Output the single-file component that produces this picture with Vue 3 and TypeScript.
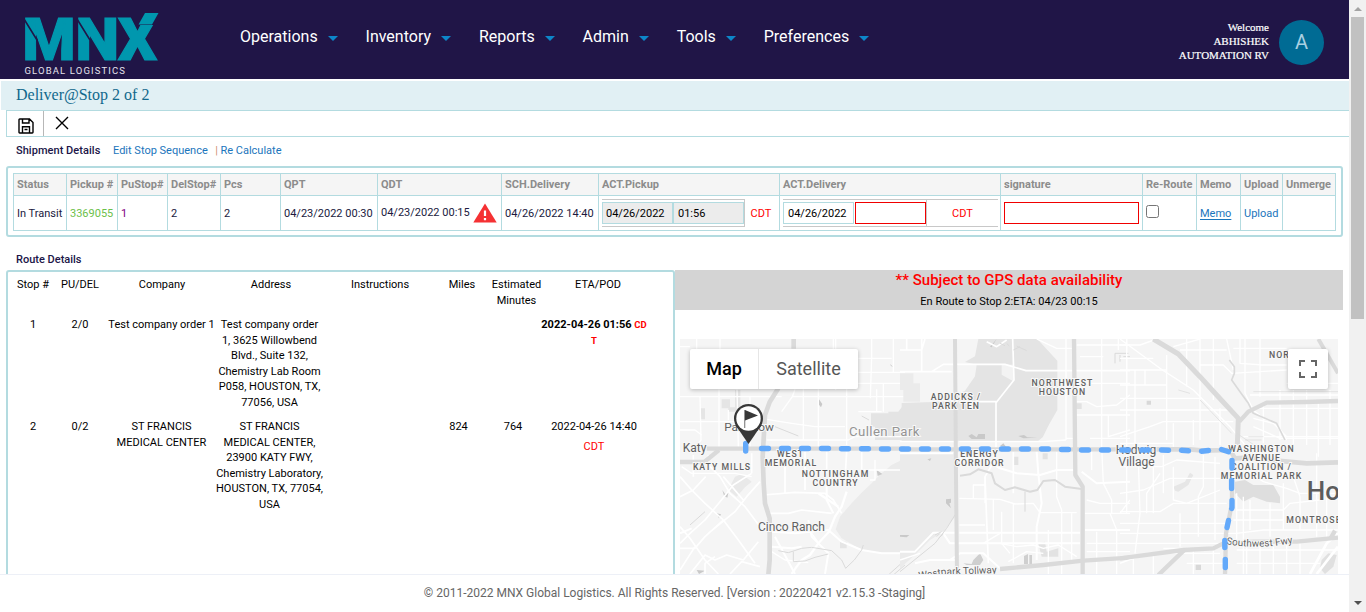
<script setup lang="ts">
interface Road { d: string; w?: number }
interface Label { x: number; y: number; t: string; s: number; ls?: number; w?: number; c?: string }

const menu: string[] = ['Operations', 'Inventory', 'Reports', 'Admin', 'Tools', 'Preferences']
const heads: string[] = ['Status', 'Pickup #', 'PuStop#', 'DelStop#', 'Pcs', 'QPT', 'QDT', 'SCH.Delivery', 'ACT.Pickup', 'ACT.Delivery', 'signature', 'Re-Route', 'Memo', 'Upload', 'Unmerge']
const routeHeads: string[] = ['Stop #', 'PU/DEL', 'Company', 'Address', 'Instructions', 'Miles', 'Estimated\nMinutes', 'ETA/POD']

const tiles: { x: number; areas: { d: string; c: string }[]; roads: Road[]; highways: Road[] }[] = [
  {
    x: 675,
    areas: [
      { d: 'M690 385L650 405L620 430L590 460L560 488L530 520L495 560L482 598L500 625L560 660L620 668H690Z', c: '#ebebeb' },
      { d: 'M690 219L670 245H640V250H588V290H600V330H690Z', c: '#e4e4e4' },
      { d: 'M180 440L200 432L230 455L210 472L185 500L160 480Z', c: '#e9e9e9' },
      { d: 'M140 208H165V235H140ZM180 180H196V230H205V245H160V232H180ZM75 235H90V268H75ZM495 635H515V655H495Z', c: '#e5e5e5' },
      { d: 'M142 480L150 492L160 488L157 503L147 497ZM432 208L442 222L438 232L432 224ZM605 420L622 432L608 438ZM65 720L90 722L72 732ZM645 102L656 112L648 108Z', c: '#c9c9c9' },
      { d: 'M125 550L138 553L132 565Z', c: '#c9c9c9' }
    ],
    roads: [
      { d: 'M15 50H45M65 27V58M135 27V58M15 200H320M132 178V350M75 200L78 330L50 370M15 275H265M186 178L190 350' },
      { d: 'M275 268L350 280L420 290H510M320 245L352 200L360 178M352 200H690M385 178V330M430 130V350M482 27V180M515 155V345' },
      { d: 'M490 60V160H690M550 127H690M590 27V80L586 205M655 27V127M625 160V245M550 245H620M275 330H520L540 320H690' },
      { d: 'M475 27V58M550 85H650M605 178V245M160 240V270M225 200V350M15 300H60L80 315' },
      { d: 'M100 375V420M55 375V440M230 370V430M330 365V490M390 365V480M515 365L510 450L520 470M455 365V430M560 365V420H690', w: 5 },
      { d: 'M15 440L50 480L90 520L145 570L190 630L240 700M90 395L135 440L165 490L210 530L255 590M230 430L175 465L135 515L90 570L45 610L15 640', w: 5 },
      { d: 'M15 500L55 480L92 440M145 440L205 510M255 455L215 500L180 545L100 610M15 655H60L90 620L145 570M15 590L45 625L90 690L130 732M45 732L90 675L120 690L155 675L205 690L250 635', w: 5 },
      { d: 'M15 720L60 650M90 732V700L120 680M165 732L200 695L255 710M265 495L360 487L450 490L475 510L500 550M275 550H340L380 540L470 550', w: 5 },
      { d: 'M430 490L490 530M515 485L500 530L480 560L462 605L430 640L405 675L380 690L365 710L350 732', w: 7 },
      { d: 'M15 610L50 595M290 605L360 610L460 600L500 635L560 660L620 670H690M290 650L350 655L380 650M300 620L360 732M400 570L410 620L460 670L450 732M455 460V510L475 550', w: 6 },
      { d: 'M410 610L435 645M290 665L330 690L400 698M585 450H600V390M330 365L350 395M20 410L50 430H180L230 440' }
    ],
    highways: [
      { d: 'M356 27V56', w: 14 },
      { d: 'M310 175L284 216L270 255L263 380L266 460L270 520L284 565V690L280 735', w: 14 },
      { d: 'M95 356H690', w: 13 }, { d: 'M15 396H88L132 360', w: 13 },
      { d: 'M310 662L340 668L380 655L410 652L470 662L500 690L512 715L538 690L560 660L565 645M355 665V695L390 693L420 682L460 672', w: 3 },
      { d: 'M640 735L690 690M655 735L690 705M45 585L90 545M300 290L370 318M560 258L582 270', w: 3 }
    ]
  },
  {
    x: 900,
    areas: [
      { d: 'M235 27H412L472 92V240L448 282L428 322L415 332H5V219L170 214V194L195 182L225 139L230 104L195 96L225 79Z', c: '#e4e4e4' },
      { d: 'M305 104H340V154L305 134Z', c: '#f3f3f3' },
      { d: 'M0 368H165V560L130 605L90 630L50 670L0 715Z', c: '#ebebeb' },
      { d: 'M0 130H40V160H60V215H10V180H0Z', c: '#ebebeb' },
      { d: 'M340 380H355V405H340ZM428 370H443V388H428ZM528 220H545V237H528ZM415 640L435 635L440 665L475 655V680H425Z', c: '#e2e2e2' },
      { d: 'M205 318L215 312L230 322L235 312H255V327H215ZM270 50L290 27L275 52ZM355 318L372 315L382 322L412 323L370 325ZM300 348L310 340L318 350ZM138 508L153 506V518L148 520L153 535L138 520ZM0 615H28L20 622L0 620ZM82 388L94 385L90 393Z', c: '#c9c9c9' },
      { d: 'M190 700L215 702L220 690L240 670L250 690L240 705H200ZM372 678L384 672V702H372ZM388 675H396V704H388Z', c: '#cfcfcf' }
    ],
    roads: [
      { d: 'M0 60H65L75 27M65 27V125M0 125H155M20 27V58M95 125L130 103H315L378 122H690', w: 5 },
      { d: 'M260 35L290 50L320 30M338 27L342 150L288 218V350L282 395L255 440L265 700M178 215H290M340 365V490', w: 5 },
      { d: 'M410 27L470 55H520M498 27V330M605 27V350L610 460L635 510V550M655 27V60M680 27V200M530 45H690M540 80H610M530 160H690' },
      { d: 'M530 215H560L590 230L650 225L690 195M530 255H690M625 255V320L690 300M498 325H530M0 335H170M178 335H430L498 330M570 325H690' },
      { d: 'M0 370H160M178 385H250L300 415L350 430L420 435L470 420H520M545 425L590 460L690 455M410 365L415 430L425 520L410 590V690', w: 6 },
      { d: 'M178 505L300 508L345 522L400 520L420 548H530M560 510L600 520H690M555 550H690M220 505V465H255M255 440V520M470 365V500L485 540V732' },
      { d: 'M178 608H540M555 600H690M0 665H45L100 608H165M45 700L90 690L130 690H170M130 610L150 640H540M150 690L180 670H250L300 715', w: 6 },
      { d: 'M305 545V640L330 670M340 520V700M445 600V732M515 550V700M560 640H690M560 665H690M590 605V732M630 550L650 600V732M660 550L690 510M280 508V600' },
      { d: 'M0 690L60 670M180 640L250 640L300 610M300 640L350 650L400 645L430 655L475 645L530 680M325 695L380 665L430 670M178 585H255M575 365V420' }
    ],
    highways: [
      { d: 'M165 27L168 440L171 735', w: 12 }, { d: 'M522 27L526 435L548 470V735', w: 13 },
      { d: 'M0 358H690', w: 13 }, { d: 'M300 717L430 705L550 692L690 683', w: 13 },
      { d: 'M180 437L210 433L235 418L275 430L285 460L315 480L345 472L390 485L412 480L430 453L465 450L495 470L545 477', w: 6 },
      { d: 'M0 725L105 640L140 595L165 555M105 615L125 605M110 620L120 610M115 625L130 612', w: 3 },
      { d: 'M300 40L315 47M320 40L328 48M350 48L380 62M340 60L360 50M645 70H685M645 70V100M660 75V95M670 80H690M375 485V545', w: 3 }
    ]
  },
  {
    x: 1120,
    areas: [
      { d: 'M345 455L375 450L400 465L460 465L480 500V520L440 515L400 500L370 515L345 490Z', c: '#dedede' },
      { d: 'M160 470L195 455L210 428L220 435L205 465L175 485L165 482Z', c: '#e6e6e6' },
      { d: 'M605 690L625 670L650 675L640 710L615 732L600 715Z', c: '#e0e0e0' },
      { d: 'M80 212H93V224H80ZM227 704H243V720H227ZM385 630H400V650H385Z', c: '#d8d8d8' }
    ],
    roads: [
      { d: 'M0 45H60L110 27M0 85H100M0 120H140M0 165H140M20 27V350M45 120V350M75 120V165M140 75V330M0 205H240M0 240H340' },
      { d: 'M0 27L120 115L220 180L330 290L375 345M160 50L240 27M180 60H320M200 27V170M240 27V330M280 27V210M320 27L340 120' },
      { d: 'M240 105H310L335 130L500 120M340 55H500M360 27V100L430 105H500M420 27V200M480 180V330M400 235H654M400 265L460 280L500 320' },
      { d: 'M375 27V190L400 240L430 265L470 280L500 330M390 195H654M430 225V340M520 180V345M560 180V345M595 220V380M630 180V345M500 160H654' },
      { d: 'M400 290L480 325H654M370 320H654M0 320L90 290L130 275L340 275M0 340H160M160 280V350M220 270V345M300 235V345' },
      { d: 'M20 375V550M55 390L60 550L45 670M100 385V550M130 375V490M160 410V510L200 520L300 480M250 375V470L235 500V620M285 380V630' },
      { d: 'M0 410H125L170 390L300 400M0 490L70 480L150 445H300M0 545H120L160 520H320M0 580H320M0 610H350L430 600H654M0 640H310' },
      { d: 'M120 430L80 490V550M180 550V650M350 400L430 455L500 475L540 490H650M350 490V630M370 500V732M390 510V600M450 520V620M490 460V600' },
      { d: 'M520 440L540 500V600M590 370V620M620 500V620M350 540H490L510 520L600 510M340 570H490M380 625V732M420 650V732M460 650V732M540 640V732' },
      { d: 'M350 660H654M350 700H600M500 620L500 732M0 700L80 670H300M40 680V732M100 670V732M220 655V732M280 655V732M130 655H210M200 700H310' },
      { d: 'M570 732L620 640L654 610M590 732L654 650', w: 8 }
    ],
    highways: [
      { d: 'M100 27L175 72L240 140L290 195L355 265L352 345', w: 15 },
      { d: 'M358 275L385 245L440 218L555 216L654 213', w: 13 },
      { d: 'M595 27L654 130', w: 12 },
      { d: 'M0 358H210L250 362L330 360L345 385L400 382L470 392L560 400L654 397', w: 14 },
      { d: 'M336 385V520L318 610L315 735', w: 13 },
      { d: 'M0 685L190 660L280 655L310 640L400 635H530L654 623', w: 13 },
      { d: 'M195 658L115 735M632 625L645 602', w: 13 },
      { d: 'M328 90L343 110V130L335 150L360 185L385 220L400 250L435 265L470 280L495 330', w: 5 },
      { d: 'M400 185H654M385 320H430M375 330H425M240 210L335 310M350 310L410 350M175 180L210 190', w: 2 }
    ]
  }
]

const labels: Label[] = [
  { x: 749, y: 431, t: 'Park Row', s: 11.8 },
  { x: 694.5, y: 452, t: 'Katy', s: 12 },
  { x: 722, y: 470, t: 'KATY MILLS', s: 8.7, ls: 1 },
  { x: 790.5, y: 457, t: 'WEST', s: 8.7, ls: 1 },
  { x: 791, y: 466, t: 'MEMORIAL', s: 8.7, ls: 1 },
  { x: 835.5, y: 477, t: 'NOTTINGHAM', s: 8.7, ls: 1.1 },
  { x: 835.5, y: 486, t: 'COUNTRY', s: 8.7, ls: 1 },
  { x: 791.5, y: 531, t: 'Cinco Ranch', s: 12 },
  { x: 884.5, y: 436, t: 'Cullen Park', s: 13.2, ls: 0.4, c: '#949494' },
  { x: 956, y: 400, t: 'ADDICKS /', s: 8.7, ls: 1 },
  { x: 956, y: 409, t: 'PARK TEN', s: 8.7, ls: 1 },
  { x: 1062.5, y: 386, t: 'NORTHWEST', s: 8.7, ls: 1.1 },
  { x: 1062.5, y: 395, t: 'HOUSTON', s: 8.7, ls: 1 },
  { x: 979.5, y: 457, t: 'ENERGY', s: 8.7, ls: 1 },
  { x: 979.5, y: 466, t: 'CORRIDOR', s: 8.7, ls: 1 },
  { x: 1136, y: 454, t: 'Hedwig', s: 12 },
  { x: 1136.5, y: 466, t: 'Village', s: 12 },
  { x: 1261.5, y: 452, t: 'WASHINGTON', s: 8.7, ls: 1 },
  { x: 1261.5, y: 461, t: 'AVENUE', s: 8.7, ls: 1 },
  { x: 1261.5, y: 470, t: 'COALITION /', s: 8.7, ls: 1 },
  { x: 1261.5, y: 479, t: 'MEMORIAL PARK', s: 8.7, ls: 1 },
  { x: 1286, y: 358, t: 'NORTH', s: 8.7, ls: 1 },
  { x: 1314, y: 523, t: 'MONTROSE', s: 8.7, ls: 1.1 },
  { x: 1356, y: 500, t: 'Houston', s: 26, w: 500, c: '#5c5c5c' }
]
</script>

<template>
  <div class="screen">
    <div class="page">
      <header class="top">
        <svg class="logo" width="140" height="66" viewBox="20 10 140 66">
          <g class="mark">
            <text x="22.500" y="60" textLength="53" lengthAdjust="spacingAndGlyphs">M</text>
            <text x="75.500" y="60" textLength="43.500" lengthAdjust="spacingAndGlyphs">N</text>
            <text x="118" y="60" textLength="39" lengthAdjust="spacingAndGlyphs">X</text>
          </g>
          <path class="cut" d="M24 19L37 40V61M77 19L90 40V61" />
          <path d="M137 10H162V25H137Z" fill="#201547" />
          <path class="flag" d="M145 13H158.500L152 24.500H138.500Z" />
          <text class="sub" x="24.500" y="73.700" textLength="100.500">GLOBAL LOGISTICS</text>
        </svg>
        <nav class="menu">
          <a v-for="m in menu" :key="m" class="item">{{ m }}<i class="caret"></i></a>
        </nav>
        <div class="user">
          <div class="welcome">Welcome<br />ABHISHEK<br />AUTOMATION RV</div>
          <div class="avatar">A</div>
        </div>
      </header>
      <h1 class="title">Deliver@Stop 2 of 2</h1>
      <div class="toolbar">
        <button class="tool save">
          <svg width="16" height="16" viewBox="0 0 16 16"><path d="M1 1.700Q1 1 1.700 1H11.500L15 4.500V14.300Q15 15 14.300 15H1.700Q1 15 1 14.300ZM4.500 1V5H11V1M4.500 15V8.800H11.500V15M6.500 11.500H9.500" /></svg>
        </button>
        <button class="tool close">
          <svg width="14" height="14" viewBox="0 0 14 14"><path d="M1 1L13 13M13 1L1 13" /></svg>
        </button>
      </div>
      <div class="links"><b>Shipment Details</b><a>Edit Stop Sequence</a><i>|</i><a>Re Calculate</a></div>
      <section class="shipment">
        <div class="grid">
          <div v-for="h in heads" :key="h" class="th">{{ h }}</div>
          <div class="td">In Transit</div>
          <div class="td green">3369055</div>
          <div class="td purple">1</div>
          <div class="td">2</div>
          <div class="td">2</div>
          <div class="td">04/23/2022 00:30</div>
          <div class="td qdt"><span>04/23/2022 00:15</span>
            <svg width="24" height="20" viewBox="0 0 24 20"><path d="M12 .5L23.700 19.500H.3Z" fill="#f53133" /><path d="M12 7.500V13M12 15V17.300" stroke="#fff" stroke-width="2.200" /></svg>
          </div>
          <div class="td">04/26/2022 14:40</div>
          <div class="td pair">
            <div class="fields closed"><span class="box off">04/26/2022</span><span class="box off">01:56</span></div><span class="cdt">CDT</span>
          </div>
          <div class="td pair">
            <div class="fields wide"><span class="box first-box">04/26/2022</span><span class="box error">&nbsp;</span><span class="cdt mid">CDT</span></div>
          </div>
          <div class="td pair"><span class="box error sign"></span></div>
          <div class="td pair"><span class="check"></span></div>
          <div class="td link"><u>Memo</u></div>
          <div class="td link">Upload</div>
          <div class="td"></div>
        </div>
      </section>
      <h2 class="section">Route Details</h2>
      <div class="lower">
        <section class="route">
          <div class="rrow rhead"><div v-for="h in routeHeads" :key="h">{{ h }}</div></div>
          <div class="rrow first">
            <div>1</div><div>2/0</div><div>Test company order 1</div>
            <div>Test company order<br />1, 3625 Willowbend<br />Blvd., Suite 132,<br />Chemistry Lab Room<br />P058, HOUSTON, TX,<br />77056, USA</div>
            <div></div><div></div><div></div>
            <div class="eta"><b>2022-04-26 01:56</b> <em>CD<br />T</em></div>
          </div>
          <div class="rrow">
            <div>2</div><div>0/2</div><div>ST FRANCIS<br />MEDICAL CENTER</div>
            <div>ST FRANCIS<br />MEDICAL CENTER,<br />23900 KATY FWY,<br />Chemistry Laboratory,<br />HOUSTON, TX, 77054,<br />USA</div>
            <div></div><div>824</div><div>764</div>
            <div>2022-04-26 14:40<span class="zone">CDT</span></div>
          </div>
        </section>
        <section class="tracking">
          <div class="notice"><strong>** Subject to GPS data availability</strong><span>En Route to Stop 2:ETA: 04/23 00:15</span></div>
          <div class="map">
            <svg width="658" height="235" viewBox="680 339 658 235">
              <defs>
                <clipPath id="tile"><rect x="0" y="0" width="690" height="750" /></clipPath>
                <path id="tollway" d="M919 579L945 575L999 573" />
                <path id="fwy" d="M1226 544Q1256 550 1293 543" />
              </defs>
              <rect x="680" y="339" width="658" height="235" fill="#f5f5f5" />
              <g v-for="t in tiles" :key="t.x" :transform="`translate(${t.x} 330) scale(.33333)`">
                <g clip-path="url(#tile)">
                  <path v-for="a in t.areas" :key="a.d" :d="a.d" :fill="a.c" />
                  <path v-for="r in t.roads" :key="r.d" class="road" :d="r.d" :stroke-width="r.w ?? 4" />
                  <path v-for="r in t.highways" :key="r.d" class="highway" :d="r.d" :stroke-width="r.w" />
                </g>
              </g>
              <text v-for="l in labels" :key="l.t" class="label" :x="l.x" :y="l.y" :font-size="l.s" :letter-spacing="l.ls ?? 0" :font-weight="l.w ?? (l.s < 9 ? 500 : 400)" :fill="l.c ?? '#616161'">{{ l.t }}</text>
              <text class="road-name"><textPath href="#tollway">Westpark Tollway</textPath></text>
              <text class="road-name"><textPath href="#fwy">Southwest Fwy</textPath></text>
              <path class="trip" d="M745.700 443.500V451M761.500 448.500H768.500M781.500 448.500H788.500M801.500 448.500H808.500M821.500 448.500H828.500M841.500 448.700H848.500M861.500 448.800H868.500M881.500 449H888.500M901.500 449H908.500M921.500 449H928.500M941.500 449H948.500M961.500 449H968.500M981.500 449H988.500M1001.500 449H1008.500M1021.500 449H1028.500M1041.500 449H1048.500M1061.500 449.500H1068.500M1081.500 450H1088.500M1101.500 450H1108.500M1121.500 450H1128.500M1141.500 450H1148.500M1161.500 450L1168.500 450.200M1181.500 450.300L1188.500 450.800M1201.500 451.200L1208.500 450.500M1221.500 449.500L1228.500 451.800M1232 460.500V468M1231.600 480.500V488.500M1232 500.500V507.500L1231.700 508.500M1228.500 520.500L1227 527.500M1224.800 540.500V547.500M1225.300 559.500V567.500" />
              <circle cx="748.500" cy="418.500" r="14.500" fill="#383838" />
              <path d="M735.500 425L748.500 444L761.500 425Z" fill="#383838" />
              <circle cx="748.500" cy="418.500" r="12.200" fill="#fff" />
              <path d="M744.700 410V428" stroke="#888" stroke-width="1.200" />
              <path d="M745 410L758 415.500L745 420.500Z" fill="#383838" />
            </svg>
            <div class="types"><span class="active">Map</span><span>Satellite</span></div>
            <div class="full"><svg width="18" height="18" viewBox="0 0 18 18"><path d="M1 6V1H6M12 1H17V6M17 12V17H12M6 17H1V12" /></svg></div>
          </div>
        </section>
      </div>
      <footer class="foot">© 2011-2022 MNX Global Logistics. All Rights Reserved. [Version : 20220421 v2.15.3 -Staging]</footer>
    </div>
    <aside class="scroll"><i class="up"></i><div class="thumb"></div><i class="down"></i></aside>
  </div>
</template>

<style>
html, body { margin: 0; overflow: hidden; }
</style>

<style scoped>
* { box-sizing: border-box; }
.screen { display: flex; width: 1366px; height: 612px; overflow: hidden; background: #fff; font: 11px/15.6px Roboto, sans-serif; color: #1c1c1c; }
.page { width: 1349px; height: 612px; display: flex; flex-direction: column; overflow: hidden; }
.top { height: 79px; flex: none; background: #201547; display: flex; }
.logo { margin: 10px 0 0 20px; flex: none; overflow: visible; }
.mark { font: 900 59.500px Roboto, sans-serif; fill: #0097ae; }
.mark text { stroke: #0097ae; stroke-width: 1.200px; }
.cut { fill: none; stroke: #201547; stroke-width: 1.600px; }
.flag { fill: #0097ae; }
.sub { font: 9.500px Roboto, sans-serif; fill: #e4e2ec; }
.menu { display: flex; gap: 27.900px; margin: 27px 0 0 80px; height: 20px; }
.item { display: flex; align-items: center; font-size: 16px; line-height: 20px; color: #fff; white-space: nowrap; }
.caret { border: 5px solid transparent; border-bottom: 0; border-top-color: #0d86c9; margin: 2px 0 0 10px; }
.user { margin: 20px 25px 0 auto; display: flex; gap: 10px; }
.welcome { font: 11px/14px "Liberation Serif", serif; color: #fff; text-align: right; -webkit-text-stroke: .2px #fff; }
.avatar { width: 45px; height: 45px; border-radius: 50%; background: #006b94; color: #a8d0e2; font-size: 20px; line-height: 45px; text-align: center; }
.title { flex: none; margin: 2px 0 0 1px; height: 29px; padding-left: 15px; background: #e1f0f4; color: #11688c; font: 16px/28px "Liberation Serif", serif; }
.toolbar { flex: none; display: flex; height: 27px; margin-left: 6px; border: 1px solid #b3dbe0; border-right: 0; }
.tool { width: 37px; height: 25px; border: 0; padding: 0; background: none; display: flex; align-items: center; justify-content: center; }
.tool svg { fill: none; stroke: #000; stroke-width: 1.400px; }
.save { border-right: 1px solid #b7b7b7; padding: 4px 0 0 1px; }
.close { padding: 0 2px 1px 0; }
.links { height: 29px; flex: none; display: flex; padding: 6px 0 0 16px; line-height: 16px; color: #1b75bc; }
.links b { color: #201547; font-weight: 500; width: 97px; letter-spacing: .04px; }
.links a { color: #1b75bc; }
.links i { color: #d09070; font-style: normal; margin: 0 2.500px 0 7.500px; }
.shipment { flex: none; margin-left: 6px; width: 1337px; height: 71px; border: 2px solid #b3dbe0; border-radius: 3px; padding: 5px; }
.grid { width: 1323px; height: 58px; display: grid; grid-template-columns: 53px 51px 50px 53px 60px 97px 124px 97px 181px 221px 142px 54px 44px 42px 53px; grid-template-rows: 22px 35px; border-right: 1px solid #b3dbe0; border-bottom: 1px solid #b3dbe0; }
.th, .td { border-left: 1px solid #b3dbe0; border-top: 1px solid #b3dbe0; padding-left: 3px; white-space: nowrap; }
.th { background: #f5f5f5; color: #8c8c8c; font-weight: 700; line-height: 21px; }
.td { line-height: 35px; color: #201a40; }
.green { color: #6cc04a; }
.purple { color: #800080; }
.link { color: #1b75bc; }
.link u { text-underline-offset: 2px; }
.qdt { display: flex; gap: 3px; line-height: 33px; }
.qdt svg { margin-top: 7px; }
.pair { display: flex; }
.fields { display: flex; height: 28px; margin-top: 3px; border: 1px solid #c8c8c8; border-left: 0; border-right: 0; padding-top: 2px; }
.closed { width: 143px; border-right: 1px solid #c8c8c8; }
.wide { width: 215px; }
.box { width: 71px; height: 22px; line-height: 21px; border: 1px solid #b3dbe0; padding-left: 4px; color: #000; flex: none; }
.first-box { margin-right: 1px; }
.off { background: #ececec; }
.off:first-child { padding-left: 3px; }
.error { border-color: #f00000; }
.cdt { color: #f00; padding-left: 5.500px; }
.fields .mid { flex: 1; padding: 3px 0 0; text-align: center; line-height: 22px; margin-top: -2px; border-left: 1px solid #c8c8c8; height: 26px; }
.sign { width: 135px; margin-top: 6px; }
.check { width: 13px; height: 13px; border: 1px solid #767676; border-radius: 2.500px; margin-top: 9px; }
.section { flex: none; margin: 0; height: 33px; padding: 15px 0 0 16px; font: 500 11px/16px Roboto, sans-serif; color: #201547; }
.lower { height: 304px; flex: none; display: flex; overflow: hidden; padding-left: 6px; }
.route { width: 669px; height: 340px; flex: none; border: 2px solid #b3dbe0; border-radius: 3px; padding: 5px 0 0 5px; color: #000; }
.rrow { display: grid; grid-template-columns: 40px 54px 109px 107px 108px 55px 54px 108px; text-align: center; white-space: nowrap; height: 102px; }
.rhead { grid-template-columns: 40px 54px 110px 108px 110px 54px 55px 108px; height: 40px; white-space: pre; }
.eta b { font-weight: 700; }
.eta em { color: #f00; font-style: normal; font-weight: 700; font-size: 9.500px; }
.zone { display: block; color: #f00; margin-top: 4px; }
.tracking { width: 668px; }
.notice { background: #d4d4d4; height: 40px; display: flex; flex-direction: column; align-items: center; color: #000; }
.notice strong { font-size: 15px; line-height: 21px; color: #f00; font-weight: 500; letter-spacing: .04px; }
.notice span { line-height: 21px; }
.map { position: relative; margin: 29px 0 0 5px; width: 658px; height: 235px; }
.map > svg { display: block; }
.road { fill: none; stroke: #fff; stroke-linejoin: round; }
.highway { fill: none; stroke: #dadada; stroke-linejoin: round; }
.label { text-anchor: middle; font-family: Roboto, sans-serif; stroke: #f8f8f8; stroke-width: 2px; paint-order: stroke; }
.road-name { font: 10px Roboto, sans-serif; fill: #616161; stroke: #f8f8f8; stroke-width: 2px; paint-order: stroke; }
.trip { fill: none; stroke: #63a9fa; stroke-width: 5.400px; stroke-linecap: round; }
.types { position: absolute; left: 10px; top: 10px; height: 40px; width: 168px; display: flex; background: #fff; border-radius: 2px; box-shadow: 0 1px 4px rgba(0, 0, 0, .25); font-size: 18px; line-height: 40px; color: #565656; }
.types span { width: 99px; text-align: center; }
.types .active { width: 69px; color: #000; font-weight: 500; border-right: 1px solid #e6e6e6; }
.full { position: absolute; right: 10px; top: 10px; width: 40px; height: 40px; background: #fff; border-radius: 2px; box-shadow: 0 1px 4px rgba(0, 0, 0, .25); display: flex; align-items: center; justify-content: center; }
.full path { fill: none; stroke: #666; stroke-width: 2px; }
.foot { flex: none; height: 38px; border-top: 1px solid #edf0f7; background: #fff; text-align: center; font-size: 12px; line-height: 36px; color: #666; }
.scroll { width: 17px; background: #f1f1f1; display: flex; flex-direction: column; align-items: center; }
.thumb { width: 13px; height: 302px; background: #c1c1c1; margin-top: 6px; }
.up { border: 4px solid transparent; border-top: 0; border-bottom-color: #a3a3a3; margin-top: 7px; }
.down { border: 4px solid transparent; border-bottom: 0; border-top-color: #505050; margin: auto 0 7px; }
</style>
